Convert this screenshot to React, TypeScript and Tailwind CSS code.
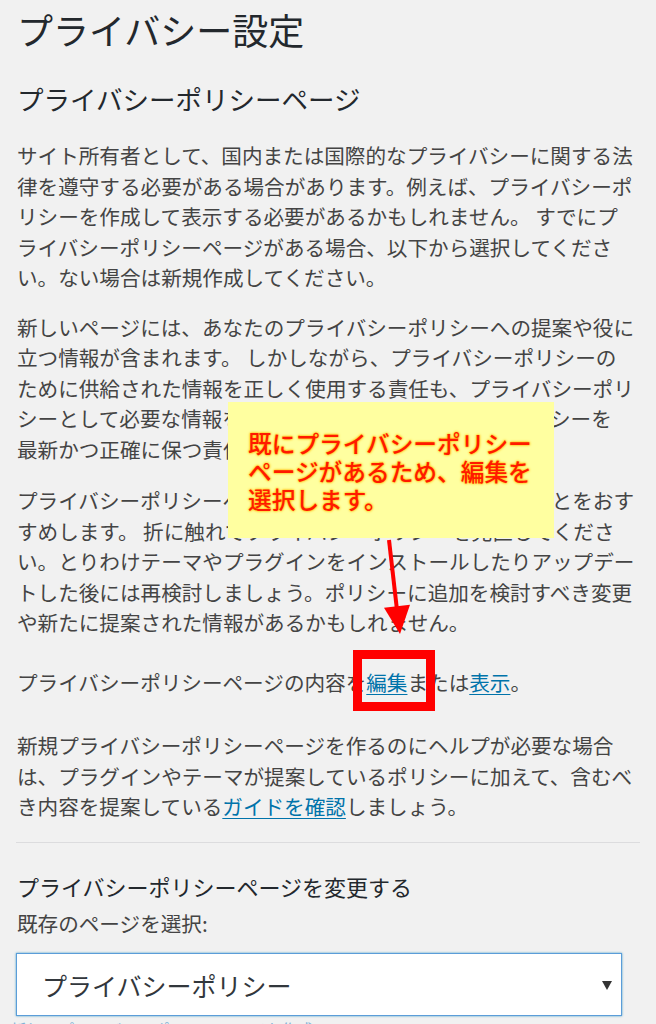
import React from "react";

const Link = ({ children }: { children: React.ReactNode }) => (
  <a className="text-[#0073aa] underline underline-offset-[3px] decoration-1">{children}</a>
);

export default function App() {
  return (
    <div className="relative min-h-screen w-[656px] overflow-hidden bg-[#f1f1f1] font-['Noto_Sans_CJK_JP','Noto_Sans',sans-serif] text-[#444]">
      <div className="pl-[17px] pr-[18px] pt-[6px]">
        <h1 className="text-[36px] leading-[46px] font-normal text-[#23282d]">プライバシー設定</h1>
        <h2 className="mt-[29px] text-[26.5px] leading-[36px] font-normal text-[#23282d]">プライバシーポリシーページ</h2>

        <p className="mt-[23px] whitespace-nowrap text-[20.6px] leading-[30.5px]">
          サイト所有者として、国内または国際的なプライバシーに関する法<br />
          律を遵守する必要がある場合があります。例えば、プライバシーポ<br />
          リシーを作成して表示する必要があるかもしれません。 すでにプ<br />
          ライバシーポリシーページがある場合、以下から選択してくださ<br />
          い。ない場合は新規作成してください。
        </p>

        <p className="mt-[19px] whitespace-nowrap text-[20.6px] leading-[30.5px]">
          新しいページには、あなたのプライバシーポリシーへの提案や役に<br />
          立つ情報が含まれます。 しかしながら、プライバシーポリシーの<br />
          ために供給された情報を正しく使用する責任も、プライバシーポリ<br />
          シーとして必要な情報を確認する責任も、そしてそのポリシーを<br />
          最新かつ正確に保つ責任もあなたにあります。
        </p>

        <p className="mt-[21px] whitespace-nowrap text-[20.6px] leading-[30.5px]">
          プライバシーポリシーページは、定期的に更新し続けることをおす<br />
          すめします。 折に触れてプライバシーポリシーを見直してくださ<br />
          い。とりわけテーマやプラグインをインストールしたりアップデー<br />
          トした後には再検討しましょう。ポリシーに追加を検討すべき変更<br />
          や新たに提案された情報があるかもしれません。
        </p>

        <p className="mt-[29px] whitespace-nowrap text-[20.6px] leading-[30.5px]">
          プライバシーポリシーページの内容を<Link>編集</Link>または<Link>表示</Link>。
        </p>

        <p className="mt-[33px] whitespace-nowrap text-[20.6px] leading-[30.5px]">
          新規プライバシーポリシーページを作るのにヘルプが必要な場合<br />
          は、プラグインやテーマが提案しているポリシーに加えて、含むべ<br />
          き内容を提案している<Link>ガイドを確認</Link>しましょう。
        </p>
      </div>

      <div className="mx-[16px] mt-[20px] h-px bg-[#dcdcde]" />

      <div className="pl-[17px] pr-[18px]">
        <h3 className="mt-[28px] text-[22px] leading-[30px] font-normal text-[#23282d]">プライバシーポリシーページを変更する</h3>
        <div className="mt-[7.5px] text-[20.6px] leading-[30px]">既存のページを選択:</div>
      </div>

      <div className="ml-[16px] mt-[15px] flex h-[63px] w-[606px] items-center justify-between border border-[#5b9dd9] bg-white pl-[25px] pr-[9px] shadow-[0_0_2px_rgba(30,140,190,0.8)]">
        <span className="text-[25px] leading-[30px] text-[#32373c]">プライバシーポリシー</span>
        <svg width="10" height="9" viewBox="0 0 10 9" className="mt-[1px]">
          <polygon points="0,0 10,0 5,9" fill="#333" />
        </svg>
      </div>
      <div className="ml-[10px] mt-[3px] text-[16px] leading-[20px] text-[#7fb2d6]">新しいプライバシーポリシーページを作成</div>

      {/* Annotation overlays */}
      <div className="absolute left-[228px] top-[402px] h-[136px] w-[326px] bg-[#ffffa0] pl-[20px] pt-[27px]">
        <div className="whitespace-nowrap text-[23.7px] leading-[28px] font-medium text-[#ff1a00] [text-shadow:0_0_3px_#ffb400,0_0_2px_#ffc800]">
          既にプライバシーポリシー<br />
          ページがあるため、編集を<br />
          選択します。
        </div>
      </div>

      <svg className="absolute left-[370px] top-[536px]" width="60" height="104" viewBox="0 0 60 104">
        <line x1="19" y1="4" x2="27" y2="74" stroke="#f00" strokeWidth="4" />
        <polygon points="30,98 14,71.7 40,68.7" fill="#f00" />
      </svg>

      <div className="absolute left-[353px] top-[650px] h-[61px] w-[82px] border-[9px] border-[#ff0000]" />
    </div>
  );
}
